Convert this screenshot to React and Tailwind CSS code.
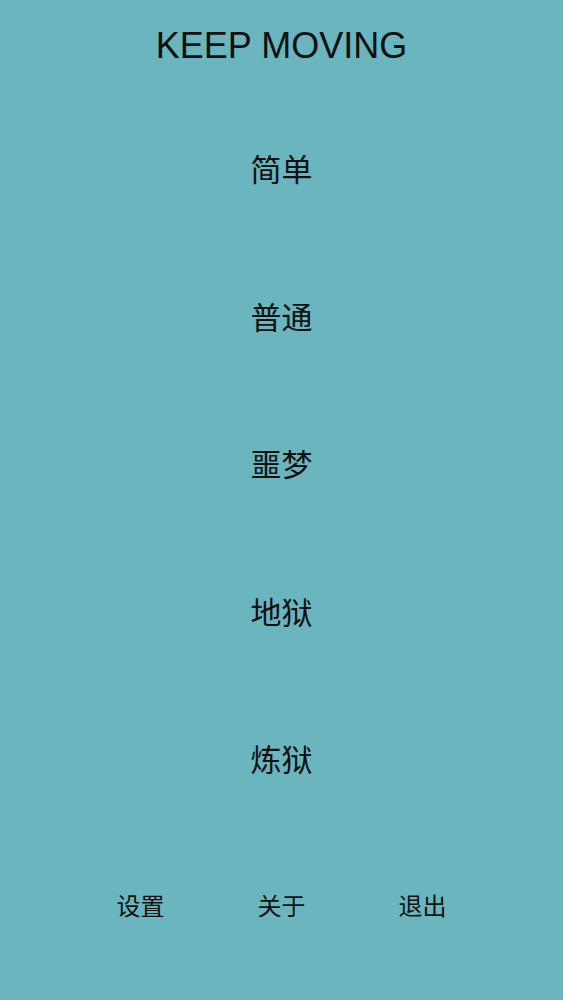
export default function App() {
  const levels = ["简单", "普通", "噩梦", "地狱", "炼狱"];
  return (
    <div className="w-full h-[1000px] bg-[#6bb5bf] text-[#111] flex flex-col font-['Noto_Sans_CJK_SC','Noto_Sans',sans-serif]">
      <div className="h-[91px] flex items-center justify-center text-[36px] leading-none font-['Liberation_Sans',Arial,sans-serif]">
        KEEP MOVING
      </div>
      <div className="pt-[3px] flex flex-col">
        {levels.map((l) => (
          <div key={l} className="h-[147.5px] flex items-center justify-center text-[31px] leading-none">
            {l}
          </div>
        ))}
      </div>
      <div className="h-[146px] px-[70px] grid grid-cols-3 items-center justify-items-center text-[24px] leading-none">
        <span>设置</span>
        <span>关于</span>
        <span>退出</span>
      </div>
    </div>
  );
}
